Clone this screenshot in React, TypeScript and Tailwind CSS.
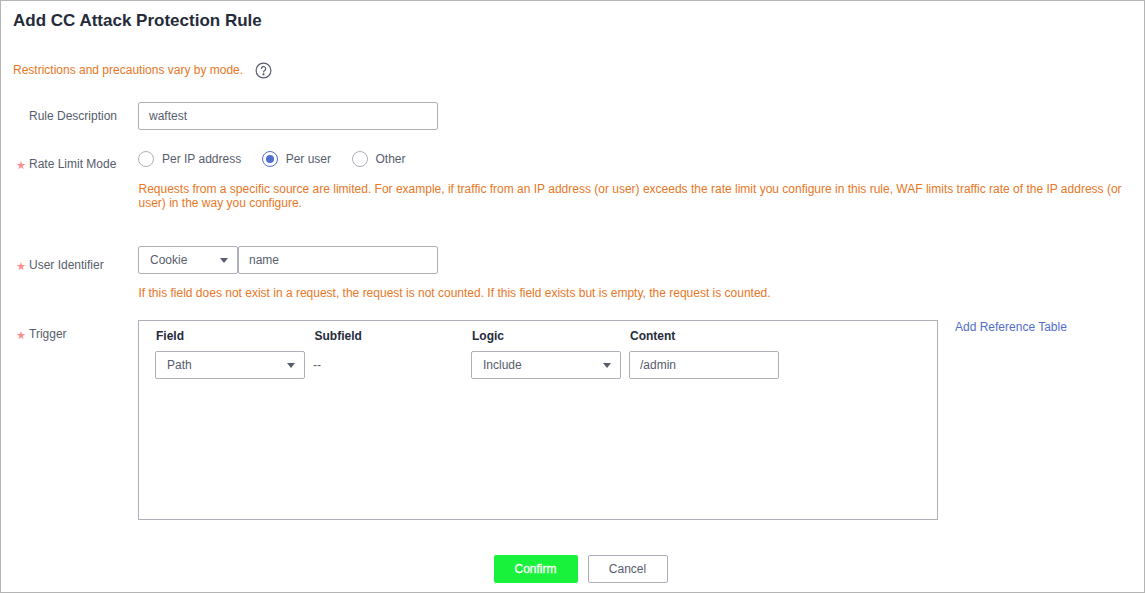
function Caret() {
  return <span className="w-0 h-0 border-x-[4.5px] border-x-transparent border-t-[5px] border-t-[#575d6c]" />;
}
function Select({ value, className }: { value: string; className: string }) {
  return (
    <div className={`h-[28px] flex items-center justify-between pl-[11px] pr-[9px] border border-[#adb0b8] rounded-[2px] bg-white text-[#575d6c] ${className}`}>
      <span>{value}</span>
      <Caret />
    </div>
  );
}
function Input({ value, className }: { value: string; className: string }) {
  return (
    <div className={`h-[28px] flex items-center pl-[10px] border border-[#adb0b8] rounded-[2px] bg-white text-[#575d6c] ${className}`}>
      {value}
    </div>
  );
}
function Label({ text, required, className }: { text: string; required?: boolean; className?: string }) {
  return (
    <div className={`w-[137px] shrink-0 flex items-center text-[#575d6c] ${className ?? ""}`}>
      <span className="w-[15px] ml-[15px] shrink-0 relative">
        {required && (
          <svg className="absolute left-0 top-[-4px]" width="10" height="10" viewBox="0 0 10 10" fill="#f88">
            <path d="M5 .8l.9 3.200h3.400L6.500 5.900l1.100 3.300L5 7.200 2.400 9.200l1.100-3.300L.7 4h3.400z" />
          </svg>
        )}
      </span>
      <span className="ml-[-2px]">{text}</span>
    </div>
  );
}
function Radio({ label, checked }: { label: string; checked?: boolean }) {
  return (
    <div className="flex items-center">
      <span className={`w-[16px] h-[16px] rounded-full border flex items-center justify-center ${checked ? "border-[#526ecc]" : "border-[#adb0b8]"}`}>
        {checked && <span className="w-[8px] h-[8px] rounded-full bg-[#526ecc]" />}
      </span>
      <span className="ml-[8px] text-[#575d6c]">{label}</span>
    </div>
  );
}
export default function App() {
  return (
    <div className="w-[1145px] h-[593px] border border-[#b4b4b4] bg-white overflow-hidden text-[12px] leading-[14px] font-['Liberation_Sans',Arial,sans-serif]">
      <h1 className="pl-[12px] pt-[10px] text-[#252b3a] font-bold text-[17px] leading-[20px]">Add CC Attack Protection Rule</h1>
      <div className="flex items-center pl-[12px] mt-[29px] h-[20px] text-[#e8771f]">
        <span>Restrictions and precautions vary by mode.</span>
        <svg className="ml-[12px]" width="17" height="17" viewBox="0 0 17 17" fill="none" stroke="#575d6c" strokeWidth="1.2">
          <circle cx="8.5" cy="8.500" r="7.4" />
          <path d="M6.3 6.800a2.200 2.200 0 1 1 3.400 1.800c-.8.500-1.200.9-1.200 1.800" />
          <circle cx="8.5" cy="12.400" r=".5" fill="#575d6c" />
        </svg>
      </div>
      <div className="flex mt-[22px] h-[28px]">
        <Label text="Rule Description" className="h-[28px]" />
        <Input value="waftest" className="w-[300px]" />
      </div>
      <div className="flex mt-[20px]">
        <Label text="Rate Limit Mode" required className="h-[14px] mt-[7px]" />
        <div className="flex-1 pr-[10px]">
          <div className="flex gap-[20.500px] h-[16px] mt-[1px]">
            <Radio label="Per IP address" />
            <Radio label="Per user" checked />
            <Radio label="Other" />
          </div>
          <p className="mt-[15px] pl-[0.500px] text-[#e8771f]">
            Requests from a specific source are limited. For example, if traffic from an IP address (or user) exceeds the rate limit you configure in this rule, WAF limits traffic rate of the IP address (or user) in the way you configure.
          </p>
        </div>
      </div>
      <div className="flex mt-[36px]">
        <Label text="User Identifier" required className="h-[28px] mt-[5px]" />
        <div>
          <div className="flex">
            <Select value="Cookie" className="w-[100px]" />
            <Input value="name" className="w-[200px]" />
          </div>
          <p className="mt-[12px] pl-[0.500px] text-[#e8771f]">If this field does not exist in a request, the request is not counted. If this field exists but is empty, the request is counted.</p>
        </div>
      </div>
      <div className="flex mt-[20px]">
        <Label text="Trigger" required className="h-[14px] mt-[7px]" />
        <div className="w-[800px] h-[200px] border border-[#adb0b8] pl-[16px] pt-[8px]">
          <div className="grid grid-cols-[150px_8px_150px_8px_150px_8px_150px]">
            <span className="font-bold text-[#252b3a] col-start-1 pl-[1px]">Field</span>
            <span className="font-bold text-[#252b3a] col-start-3 pl-[1.500px]">Subfield</span>
            <span className="font-bold text-[#252b3a] col-start-5 pl-[1px]">Logic</span>
            <span className="font-bold text-[#252b3a] col-start-7 pl-[1px]">Content</span>
            <Select value="Path" className="col-start-1 mt-[8px]" />
            <span className="col-start-3 mt-[8px] flex items-center text-[#575d6c]">--</span>
            <Select value="Include" className="col-start-5 mt-[8px]" />
            <Input value="/admin" className="col-start-7 mt-[8px]" />
          </div>
        </div>
        <a className="ml-[17px] text-[#526ecc]">Add Reference Table</a>
      </div>
      <div className="flex justify-center gap-[10px] mt-[35px] pl-[16px]">
        <button className="w-[84px] h-[28px] rounded-[2px] bg-[#18f23a] text-white [-webkit-text-stroke:0.3px_white]">Confirm</button>
        <button className="w-[80px] h-[28px] rounded-[2px] border border-[#adb0b8] text-[#575d6c]">Cancel</button>
      </div>
    </div>
  );
}
